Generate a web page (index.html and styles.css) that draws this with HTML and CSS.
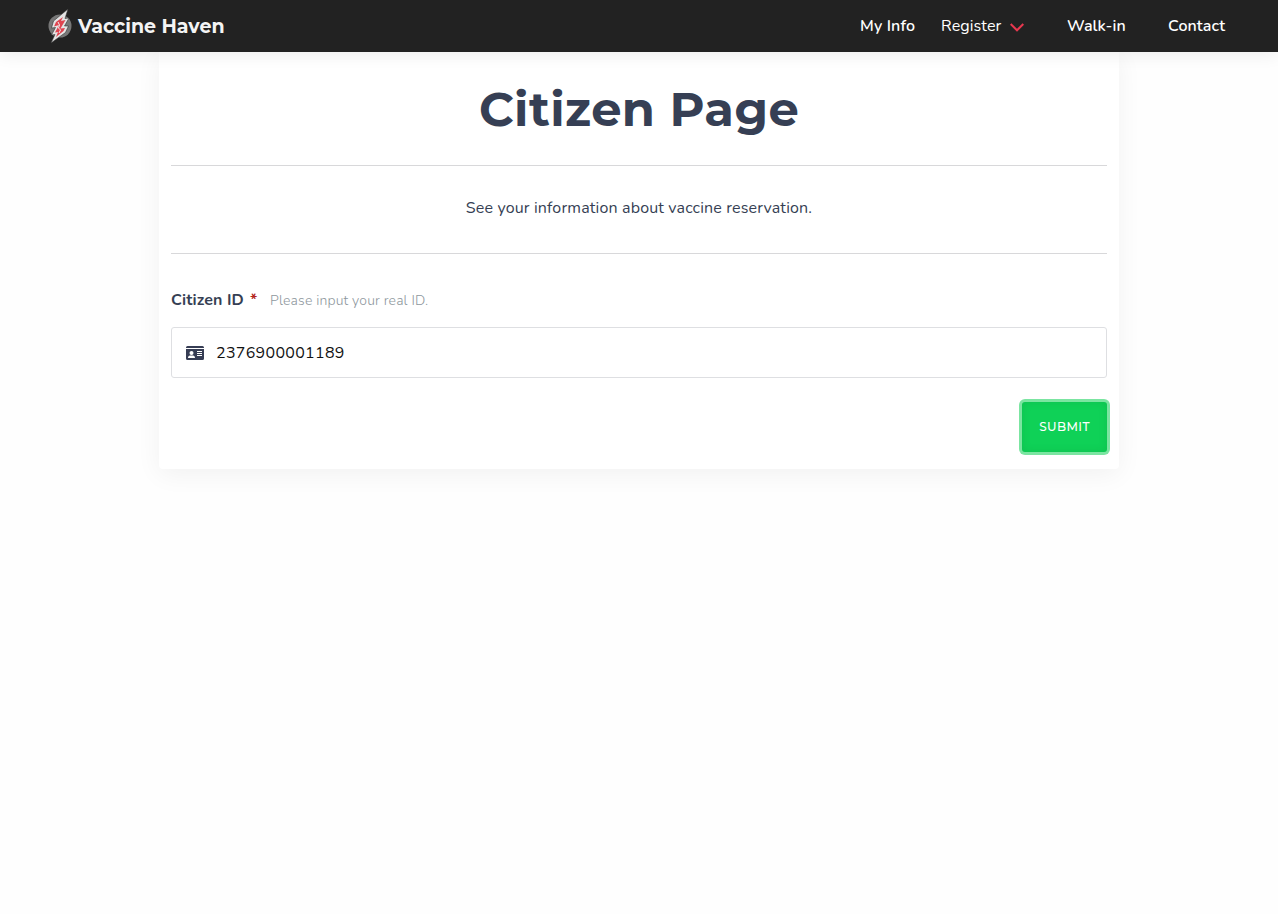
FILE: index.html
```html
<!DOCTYPE html>
<html lang="en">
<head>
<meta charset="utf-8">
<title>Vaccine Haven</title>
<link rel="stylesheet" href="styles.css">
</head>
<body>
<header class="navbar">
  <a class="brand">
    <svg class="logo" viewBox="0 0 24 36" width="24" height="36" aria-hidden="true">
      <circle cx="12" cy="18" r="11.5" fill="#777"/>
      <path d="M20 1 5.500 13 3.500 20 7.500 19.500 3.500 27 7 26.500 3 35 17.500 24.500 20.500 18 16.500 18 21 10 17 10.500Z" fill="#e4e4e4" stroke="#333" stroke-width=".6"/>
      <path d="M15 9 8 14 6 18.500 11 17 7 24.500 10 24 8 29 15.500 23 17 20 12.500 20.500 17.500 12 13 13Z" fill="#e04450"/>
      <path d="m10 14 1.500 3-1 3 2 2-1.500 3" fill="none" stroke="#eee" stroke-width="1"/>
    </svg>
    <span class="brand-name">Vaccine Haven</span>
  </a>
  <nav class="menu">
    <a class="item info"><span>My Info</span></a>
    <a class="item register"><span>Register</span>
      <svg class="chevron" viewBox="0 0 14 9" width="14" height="9"><path d="m.7 1 6.300 6.300L13.300 1" fill="none" stroke="#e8384f" stroke-width="2"/></svg>
    </a>
    <a class="item walkin"><span>Walk-in</span></a>
    <a class="item contact"><span>Contact</span></a>
  </nav>
</header>
<main class="card">
  <h1 class="title"><span>Citizen Page</span></h1>
  <hr class="rule">
  <p class="lead"><span>See your information about vaccine reservation.</span></p>
  <hr class="rule">
  <form class="form">
    <div class="label-row"><label class="label" for="citizen">Citizen ID</label><span class="star">*</span><span class="hint">Please input your real ID.</span></div>
    <div class="field">
      <svg class="id-icon" viewBox="0 0 18 14" width="18" height="14" aria-hidden="true">
        <path d="M1.500 0h15A1.500 1.500 0 0 1 18 1.500V2H0v-.5A1.500 1.500 0 0 1 1.500 0Z" fill="#363d54"/>
        <path d="M0 3h18v9.500a1.500 1.500 0 0 1-1.500 1.500h-15A1.500 1.500 0 0 1 0 12.500Z" fill="#363d54"/>
        <circle cx="5.500" cy="6.900" r="2" fill="#fff"/>
        <path d="M2 12c0-1.500.8-2.500 2-2.500h3c1.200 0 2 1 2 2.500ZM11 5h5v1h-5Zm0 2h5v1h-5Zm0 2h5v1h-5Z" fill="#fff"/>
      </svg>
      <input class="input" id="citizen" type="text" value="2376900001189">
    </div>
    <div class="actions"><button class="submit" type="button">SUBMIT</button></div>
  </form>
</main>
</body>
</html>
```
FILE: styles.css
```css
* { box-sizing: border-box; }
body {
  margin: 0;
  min-height: 914px;
  background: #fefefe;
  color: #363f54;
  font: 16px/24px Nunito, "Open Sans", sans-serif;
}
.navbar {
  position: relative;
  z-index: 1;
  display: flex;
  justify-content: space-between;
  height: 52px;
  padding: 0 53px 0 48px;
  background: #222;
  color: #fff;
  box-shadow: 0 3px 16px rgba(0, 0, 0, .07);
}
.brand { display: flex; align-items: center; gap: 6px; }
.brand-name { padding-top: 1px; font: 700 19px/24px Montserrat, Inter, sans-serif; color: #f4f4f4; white-space: nowrap; }
.menu { display: flex; align-items: center; font-weight: 600; letter-spacing: .12px; white-space: nowrap; }
.item { display: flex; align-items: center; }
.info { width: 81px; }
.register { width: 126px; font-weight: 400; gap: 9px; }
.walkin { width: 101px; }
.contact { width: 57px; }
.chevron { margin-top: 3px; }
.card {
  width: 960px;
  height: 417px;
  margin: 0 auto;
  padding: 0 12px;
  background: #fff;
  border-radius: 0 0 4px 4px;
  box-shadow: 0 5px 26px rgba(0, 0, 0, .055);
}
.title {
  margin: 0;
  height: 113px;
  padding-top: 29px;
  text-align: center;
  font: 700 48px/56px Montserrat, Inter, sans-serif;
  letter-spacing: .4px;
  white-space: nowrap;
}
.rule { height: 1px; margin: 0; border: 0; background: #d8d8da; }
.lead { margin: 0; height: 87px; padding-top: 30px; text-align: center; letter-spacing: .15px; white-space: nowrap; }
.label-row { display: flex; height: 73px; padding-top: 34px; letter-spacing: .17px; white-space: nowrap; }
.label { width: 79px; font-weight: 700; letter-spacing: .1px; }
.star { width: 20px; color: #b3241b; font-weight: 700; }
.hint { color: #8e979d; font-size: 14px; font-weight: 300; line-height: 25px; }
.field {
  display: flex;
  align-items: center;
  gap: 12px;
  height: 51px;
  padding: 0 14px;
  border: 1px solid #dedfe2;
  border-radius: 3px;
}
.input { flex: 1; padding: 0; border: 0; outline: 0; background: none; color: #111; font: inherit; letter-spacing: .3px; }
.actions { display: flex; justify-content: flex-end; padding-top: 24px; }
.submit {
  width: 85px;
  height: 50px;
  padding: 0;
  border: 0;
  border-radius: 3px;
  background: #0fd157;
  color: #fff;
  font: 500 12px/18px Montserrat, Inter, sans-serif;
  letter-spacing: .4px;
  box-shadow: 0 0 0 3px #7be5a1, inset 0 0 8px rgba(0, 80, 30, .13);
}
```
